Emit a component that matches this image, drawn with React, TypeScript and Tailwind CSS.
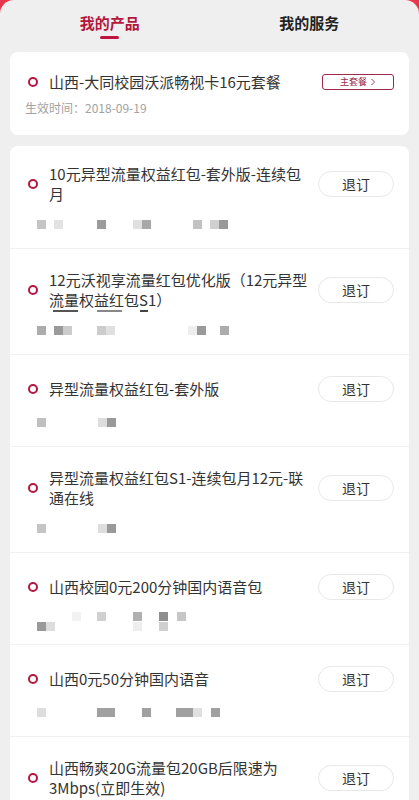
const font = { fontFamily: '"Noto Sans CJK SC", "Noto Sans", sans-serif' }

type Block = [number, number, number, string]

const products: { title: string; blocks: Block[]; scratch?: boolean }[] = [
  {
    title: '10元异型流量权益红包-套外版-连续包月',
    blocks: [
      [17, 4, 9, '#c4c4c4'],
      [34, 4, 9, '#e2e2e2'],
      [77, 4, 9, '#9c9c9c'],
      [113, 4, 9, '#e0e0e0'],
      [122, 4, 9, '#a8a8a8'],
      [173, 4, 9, '#c2c2c2'],
      [190, 4, 9, '#d0d0d0'],
      [199, 4, 9, '#999999'],
    ],
  },
  {
    title: '12元沃视享流量红包优化版（12元异型流量权益红包S1）',
    scratch: true,
    blocks: [
      [17, 4, 9, '#acacac'],
      [34, 4, 9, '#9a9a9a'],
      [43, 4, 9, '#cccccc'],
      [77, 4, 9, '#cccccc'],
      [86, 4, 9, '#e0e0e0'],
      [168, 4, 9, '#eeeeee'],
      [177, 4, 9, '#9a9a9a'],
      [200, 4, 9, '#acacac'],
    ],
  },
  {
    title: '异型流量权益红包-套外版',
    blocks: [
      [17, 4, 9, '#c0c0c0'],
      [78, 4, 9, '#dddddd'],
      [87, 4, 9, '#999999'],
    ],
  },
  {
    title: '异型流量权益红包S1-连续包月12元-联通在线',
    blocks: [
      [17, 4, 9, '#c4c4c4'],
      [78, 4, 9, '#dddddd'],
      [87, 4, 9, '#999999'],
    ],
  },
  {
    title: '山西校园0元200分钟国内语音包',
    blocks: [
      [52, 0, 9, '#f2f2f2'],
      [77, 0, 9, '#d0d0d0'],
      [113, 0, 9, '#b0b0b0'],
      [139, 0, 9, '#8e8e8e'],
      [157, 0, 9, '#c6c6c6'],
      [17, 10, 9, '#9a9a9a'],
      [26, 10, 9, '#dddddd'],
      [113, 10, 9, '#eeeeee'],
      [139, 10, 9, '#d0d0d0'],
    ],
  },
  {
    title: '山西0元50分钟国内语音',
    blocks: [
      [17, 4, 9, '#dddddd'],
      [77, 4, 18, '#a0a0a0'],
      [122, 4, 9, '#a0a0a0'],
      [156, 4, 17, '#a0a0a0'],
      [173, 4, 9, '#e0e0e0'],
      [191, 4, 9, '#a0a0a0'],
    ],
  },
  {
    title: '山西畅爽20G流量包20GB后限速为3Mbps(立即生效)',
    blocks: [],
  },
]

function Ring() {
  return <span className="block w-[10px] h-[10px] shrink-0 rounded-full border-[2.5px] border-[#b3173f]" />
}

function Mosaic({ blocks }: { blocks: Block[] }) {
  return (
    <svg width="260" height="20" className="block -ml-[18px]">
      {blocks.map(([x, y, w, c], i) => (
        <rect key={i} x={x + 10} y={y + 1} width={w} height="9" fill={c} />
      ))}
    </svg>
  )
}

export default function App() {
  return (
    <div className="min-h-screen bg-[#e8344c]" style={font}>
      <div className="min-h-screen rounded-t-[14px] bg-[#efefef] px-[10px] pb-4">
        <div className="grid grid-cols-2 pt-[13px]">
          <div className="flex flex-col items-center">
            <span className="text-[15px] leading-[20px] font-semibold text-[#b3173f]">我的产品</span>
            <span className="mt-[3px] w-[19px] h-[3px] rounded-full bg-[#c0153f]" />
          </div>
          <div className="flex flex-col items-center">
            <span className="text-[15px] leading-[20px] font-semibold text-[#222]">我的服务</span>
          </div>
        </div>

        <div className="mt-[13px] bg-white rounded-[8px] px-[15px] pt-[20px] pb-[19px]">
          <div className="flex items-center h-[20px]">
            <span className="ml-[3px]">
              <Ring />
            </span>
            <span className="ml-[11px] flex-1 text-[15px] text-[#333]">山西-大同校园沃派畅视卡16元套餐</span>
            <span className="w-[72px] h-[16px] flex items-center justify-center gap-[3px] rounded-[3px] border border-[#9b2a4a] text-[9px] text-[#9b2a4a]">
              主套餐
              <svg width="6" height="8" viewBox="0 0 6 8" fill="none">
                <path d="M1.5 1 L4.5 4 L1.5 7" stroke="#9b2a4a" strokeWidth="0.9" />
              </svg>
            </span>
          </div>
          <div className="mt-[8px] text-[12px] leading-[16px] text-[#a2a2a2]">生效时间：2018-09-19</div>
        </div>

        <div className="mt-[11px] bg-white rounded-[8px]">
          {products.map((p, i) => (
            <div
              key={i}
              className={`pl-[18px] pr-[15px] ${i === 0 ? 'pt-[18px]' : 'pt-[21px]'} pb-[13px] ${
                i < products.length - 1 ? 'border-b border-[#f1f1f1]' : ''
              }`}
            >
              <div className="flex items-center">
                <Ring />
                <span className="ml-[11px] flex-1 text-[15px] leading-[20px] text-[#333]">{p.title}</span>
                <button className="ml-[8px] w-[76px] h-[26px] shrink-0 rounded-full border border-[#e8e8e8] text-[14px] text-[#333]">
                  退订
                </button>
              </div>
              {p.scratch && (
                <svg width="120" height="3" className="block ml-[15px] -mb-[3px]">
                  <rect x="10" y="0" width="25" height="2" fill="#555" />
                  <rect x="54" y="0" width="25" height="2" fill="#888" />
                  <rect x="97" y="0" width="8" height="2" fill="#444" />
                </svg>
              )}
              <div className="mt-[11px]">
                <Mosaic blocks={p.blocks} />
              </div>
            </div>
          ))}
        </div>
      </div>
    </div>
  )
}
